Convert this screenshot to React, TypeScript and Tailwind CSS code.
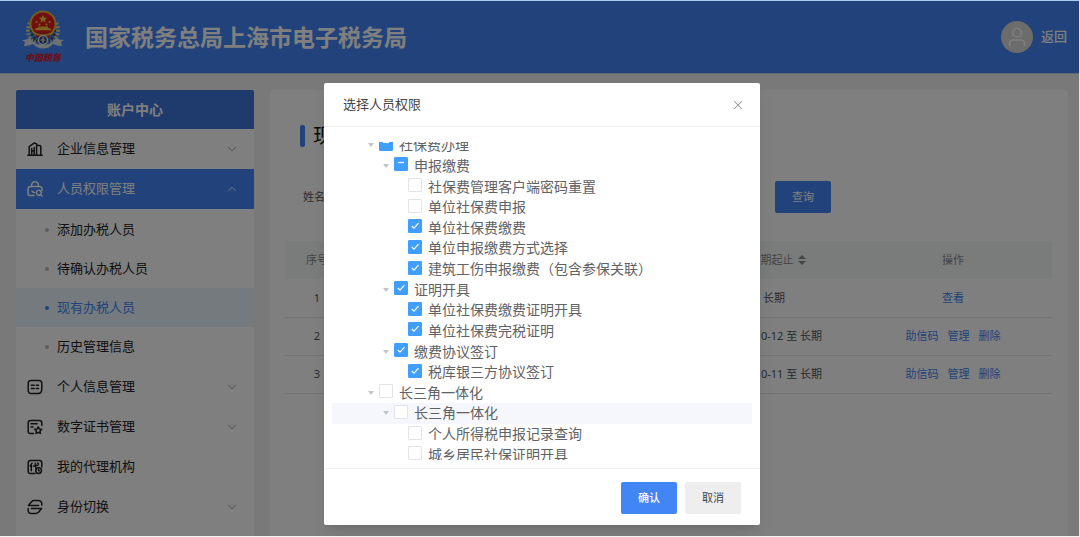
import { useState } from 'react';
import { ChevronDown, ChevronUp, X } from 'lucide-react';

type CheckState = 'on' | 'off' | 'mixed';

interface TreeNode {
  label: string;
  level: 0 | 1 | 2;
  state: CheckState;
  hover?: boolean;
}

const treeNodes: TreeNode[] = [
  { label: '社保费办理', level: 0, state: 'mixed' },
  { label: '申报缴费', level: 1, state: 'mixed' },
  { label: '社保费管理客户端密码重置', level: 2, state: 'off' },
  { label: '单位社保费申报', level: 2, state: 'off' },
  { label: '单位社保费缴费', level: 2, state: 'on' },
  { label: '单位申报缴费方式选择', level: 2, state: 'on' },
  { label: '建筑工伤申报缴费（包含参保关联）', level: 2, state: 'on' },
  { label: '证明开具', level: 1, state: 'on' },
  { label: '单位社保费缴费证明开具', level: 2, state: 'on' },
  { label: '单位社保费完税证明', level: 2, state: 'on' },
  { label: '缴费协议签订', level: 1, state: 'on' },
  { label: '税库银三方协议签订', level: 2, state: 'on' },
  { label: '长三角一体化', level: 0, state: 'off' },
  { label: '长三角一体化', level: 1, state: 'off', hover: true },
  { label: '个人所得税申报记录查询', level: 2, state: 'off' },
  { label: '城乡居民社保证明开具', level: 2, state: 'off' },
];

const indent = ['pl-[30px]', 'pl-[45px]', 'pl-[59px]'];

const subItems = ['添加办税人员', '待确认办税人员', '现有办税人员', '历史管理信息'];

const rows = [
  { no: 1, period: '长期', actions: ['查看'] },
  { no: 2, period: '2020-10-12 至 长期', actions: ['助信码', '管理', '删除'] },
  { no: 3, period: '2020-10-11 至 长期', actions: ['助信码', '管理', '删除'] },
];

const iconProps = {
  className: 'w-4 h-4 shrink-0',
  viewBox: '0 0 16 16',
  fill: 'none',
  stroke: 'currentColor',
  strokeWidth: 1.5,
  strokeLinecap: 'round' as const,
  strokeLinejoin: 'round' as const,
};

function BuildingIcon() {
  return (
    <svg {...iconProps}>
      <path d="M.8 14.2h14.4M2.2 14V5.6l5.200-3.800 2.200 1.100V14M9.600 4.600h3.200a1 1 0 0 1 1 1V14M4.700 14V7.600M7.200 14V6.500M4.700 10h2.500" />
    </svg>
  );
}

function LockIcon() {
  return (
    <svg {...iconProps}>
      <path d="M4.6 5.6V4.2a3.4 3.4 0 0 1 6.8 0v1.4M7 14.6H3.4A2.4 2.4 0 0 1 1 12.2V8a2.4 2.4 0 0 1 2.4-2.4h9.2A2.4 2.4 0 0 1 15 8v1.4M5 10c.4 1 1.200 1.500 2.400 1.500" />
      <path d="M9.400 11.300a2.500 2.500 0 0 1 4.900 0c.3 1.500-.9 2.400-2.400 3.300-1.500-.9-2.800-1.800-2.500-3.300zM13.800 14l1.200.900" />
    </svg>
  );
}

function CardIcon() {
  return (
    <svg {...iconProps}>
      <path d="M11 14.500H4A2.800 2.800 0 0 1 1.200 11.700V4.300A2.800 2.800 0 0 1 4 1.500h8a2.800 2.800 0 0 1 2.800 2.800v6M14.800 10.300c0 2.500-1.300 4.200-3.800 4.200M4.300 6.300h2.900M9.300 6.300h2.200M4.300 9.500h2.900M9.300 9.500h2.200" />
    </svg>
  );
}

function CertIcon() {
  return (
    <svg {...iconProps}>
      <path d="M6.500 14.500H3.500a2.300 2.300 0 0 1-2.300-2.300V3.800a2.300 2.300 0 0 1 2.300-2.300h9a2.300 2.300 0 0 1 2.300 2.300v2.700M4 4.800h6M4 8h2" />
      <path d="m11.200 7.800 1.100 2.100 2.400.4-1.700 1.700.4 2.400-2.200-1.100L9 14.400l.4-2.400-1.700-1.700 2.400-.4z" />
    </svg>
  );
}

function AgentIcon() {
  return (
    <svg {...iconProps}>
      <path d="M8 14.500H3.500a2.300 2.300 0 0 1-2.300-2.300V3.800a2.300 2.300 0 0 1 2.300-2.300h9a2.300 2.300 0 0 1 2.300 2.300V8M5 4.200 3.200 7.200M4.300 6v5.800M6.500 7l4.500-.8M8.300 4.200c.1 3 .3 4.800 1.200 6M10.700 4l.8.900" />
      <circle cx="11.600" cy="11.600" r="2.900" />
      <path d="M11.600 10.600v1.200h.9" />
    </svg>
  );
}

function SwitchIcon() {
  return (
    <svg {...iconProps}>
      <path d="M14.800 6V4.800a3.300 3.300 0 0 0-3.300-3.300H7.200c-1.200 0-1.900.4-2.700 1.200L1.400 6.500h10.200" />
      <path d="M1.200 9.500v1.700a3.300 3.300 0 0 0 3.300 3.300h4.300c1.200 0 1.900-.4 2.700-1.200l3.100-3.800H4.400" />
    </svg>
  );
}

function Emblem() {
  return (
    <svg className="w-[42px] h-[41px]" viewBox="0 0 42 41">
      <path d="M8 13C4 20 6 29 14 33M34 13c4 7 2 16-6 20" fill="none" stroke="#d9cfae" strokeWidth="4" strokeDasharray="2 1.500" />
      <path d="M11 16c-3 5-1 11 4 15M31 16c3 5 1 11-4 15" fill="none" stroke="#3b4a3a" strokeWidth="3" strokeDasharray="2 2" />
      <circle cx="21" cy="14" r="13.500" fill="#e9b93c" />
      <circle cx="21" cy="14" r="11.500" fill="#e01f17" />
      <path d="m21 5 1.200 2.500 2.800.3-2 1.900.5 2.700-2.500-1.300-2.500 1.300.5-2.700-2-1.900 2.800-.3z" fill="#f3c843" />
      <g fill="#f3c843">
        <circle cx="14.500" cy="12" r="1.100" />
        <circle cx="27.500" cy="12" r="1.100" />
        <circle cx="17.500" cy="14.500" r="1" />
        <circle cx="24.500" cy="14.500" r="1" />
        <path d="M14 18h14l1.500 2.200h-17zM16 16.500h10V18H16z" />
      </g>
      <path d="M13 22h16l-2 6H15z" fill="#c52318" />
      <path d="M12 23c5 3 13 3 18 0" fill="none" stroke="#e9b93c" strokeWidth="1.600" />
      <path d="M0 30c4 0 6-1 8-2 3 5 8 7 13 7s10-2 13-7c2 1 4 2 8 2l-3 2 1 4c-4 0-6-1-9-2-3 3-6 4.500-10 4.500S14 37 11 34c-3 1-5 2-9 2l1-4z" fill="#dfe4ea" />
      <circle cx="21" cy="30" r="4.500" fill="#2f4a7a" stroke="#e6e6e6" strokeWidth="1.400" />
      <path d="M21 27v6M18.500 30h5" stroke="#e6e6e6" strokeWidth="1.200" />
    </svg>
  );
}

function Header() {
  return (
    <header className="flex h-[73px] shrink-0 items-center border-b border-[#b9cfee] bg-[#4285f4] pr-3 pl-[22px] text-white">
      <div className="flex w-[42px] flex-col items-center">
        <Emblem />
        <span className="font-['Liberation_Serif','Noto_Sans_CJK_SC',serif] text-[9px] leading-[14px] font-black whitespace-nowrap text-[#d3202b] italic">
          中国税务
        </span>
      </div>
      <h1 className="ml-[21px] text-[23px] leading-8 font-bold">国家税务总局上海市电子税务局</h1>
      <a href="#back" className="ml-auto flex items-center gap-2 text-[13px] font-medium">
        <span className="flex h-8 w-8 items-center justify-center rounded-full bg-[#d9d9d9] text-white">
          <svg className="h-5 w-5" viewBox="0 0 20 20" fill="none" stroke="currentColor" strokeWidth="1.600">
            <circle cx="10" cy="5.500" r="4.200" />
            <path d="M2.500 19v-2.500a3.500 3.500 0 0 1 3.500-3.500h8a3.500 3.500 0 0 1 3.500 3.500V19" />
          </svg>
        </span>
        返回
      </a>
    </header>
  );
}

interface MenuItemProps {
  icon: React.ReactNode;
  label: string;
  active?: boolean;
  arrow?: boolean;
}

function MenuItem({ icon, label, active = false, arrow = true }: MenuItemProps) {
  const Chevron = active ? ChevronUp : ChevronDown;
  return (
    <button
      type="button"
      className={`flex h-10 w-full items-center pr-[15px] pl-[11px] text-left ${active ? 'bg-[#4285f4] text-white' : 'text-[#222]'}`}
    >
      {icon}
      <span className="ml-[14px] flex-1">{label}</span>
      {arrow && <Chevron className={`h-3.5 w-3.5 ${active ? 'text-white' : 'text-[#888]'}`} strokeWidth={1.5} />}
    </button>
  );
}

function Sidebar() {
  return (
    <nav className="w-[238px] shrink-0 self-stretch bg-white text-[13px]">
      <h2 className="flex h-[39px] items-center justify-center rounded-t-xs bg-[#3e74d8] text-sm font-bold text-white">
        账户中心
      </h2>
      <MenuItem icon={<BuildingIcon />} label="企业信息管理" />
      <MenuItem icon={<LockIcon />} label="人员权限管理" active />
      <ul className="py-px">
        {subItems.map((item) => {
          const current = item === '现有办税人员';
          return (
            <li key={item}>
              <a
                href="#staff"
                className={`flex h-[39px] items-center gap-2 pl-[29px] ${current ? 'bg-[#e8f4fc] text-[#4285f4]' : 'text-[#222]'}`}
              >
                <span className={`h-1 w-1 rounded-full ${current ? 'bg-[#4285f4]' : 'bg-[#bbb]'}`} />
                {item}
              </a>
            </li>
          );
        })}
      </ul>
      <MenuItem icon={<CardIcon />} label="个人信息管理" />
      <MenuItem icon={<CertIcon />} label="数字证书管理" />
      <MenuItem icon={<AgentIcon />} label="我的代理机构" arrow={false} />
      <MenuItem icon={<SwitchIcon />} label="身份切换" />
    </nav>
  );
}

function StaffPanel() {
  return (
    <main className="min-w-0 flex-1 self-stretch rounded-t-sm bg-white pr-4 pl-[15px] text-[11px] text-[#555]">
      <div className="flex h-[91px] items-center pl-[15px]">
        <span className="h-[22px] w-[5px] rounded-xs bg-[#4285f4]" />
        <h2 className="ml-2 text-xl text-[#111]">现有办税人员</h2>
      </div>
      <form className="flex h-8 items-center pl-[18px]">
        <label htmlFor="staff-name">姓名</label>
        <input id="staff-name" className="ml-4 h-8 w-48 rounded-xs border border-[#ddd] px-2" />
        <button type="button" className="ml-[242px] h-8 w-14 rounded-xs bg-[#4285f4] text-white">
          查询
        </button>
      </form>
      <table className="mt-7 w-full table-fixed border-collapse text-center">
        <colgroup>
          <col className="w-[64px]" />
          <col />
          <col className="w-[160px]" />
          <col className="w-[198px]" />
        </colgroup>
        <thead>
          <tr className="h-[38px] bg-[#f5f9f9] text-[#888]">
            <th className="font-normal">序号</th>
            <th />
            <th className="pr-1 font-normal">
              <span className="inline-flex items-center gap-1 whitespace-nowrap">
                有效期起止
                <svg className="h-2.5 w-2" viewBox="0 0 8 10" fill="currentColor">
                  <path d="M0 4 4 0l4 4zM0 6h8l-4 4z" />
                </svg>
              </span>
            </th>
            <th className="font-normal">操作</th>
          </tr>
        </thead>
        <tbody>
          {rows.map((row) => (
            <tr key={row.no} className="h-[38px] border-b border-[#e9e9ef]">
              <td>{row.no}</td>
              <td />
              <td className="whitespace-nowrap">{row.period}</td>
              <td>
                <div className="flex justify-center gap-[9px] text-[#4285f4]">
                  {row.actions.map((action) => (
                    <a key={action} href="#action">
                      {action}
                    </a>
                  ))}
                </div>
              </td>
            </tr>
          ))}
        </tbody>
      </table>
    </main>
  );
}

function TreeRow({ node, state, onToggle }: { node: TreeNode; state: CheckState; onToggle: () => void }) {
  return (
    <li className={`flex items-center ${indent[node.level]} ${node.hover ? 'bg-[#f5f7fc]' : ''}`}>
      <span className="flex w-[17px] justify-center">
        {node.level < 2 && (
          <svg className="h-1 w-1.5" viewBox="0 0 6 4">
            <path d="M0 0h6L3 4z" fill="#c0c4cc" />
          </svg>
        )}
      </span>
      <label className="flex items-center gap-1.5">
        <span className="mb-[3px] grid h-3.5 w-3.5">
          <input
            type="checkbox"
            checked={state === 'on'}
            onChange={onToggle}
            className={`col-start-1 row-start-1 h-3.5 w-3.5 appearance-none rounded-[1px] border ${
              state === 'off' ? 'border-[#e2e4ea] bg-white' : 'border-[#409eff] bg-[#409eff]'
            }`}
          />
          <svg
            className="pointer-events-none col-start-1 row-start-1 h-3.5 w-3.5"
            viewBox="0 0 14 14"
            fill="none"
            stroke="#fff"
            strokeWidth="1.200"
          >
            {state === 'on' && <path d="m3.800 7 2.200 2.200 4.500-5" />}
            {state === 'mixed' && <path d="M4 5.500h6" />}
          </svg>
        </span>
        {node.label}
      </label>
    </li>
  );
}

function PermissionDialog() {
  const [states, setStates] = useState(treeNodes.map((node) => node.state));

  const toggle = (index: number) =>
    setStates((prev) => prev.map((s, i) => (i === index ? (s === 'on' ? 'off' : 'on') : s)));

  return (
    <div
      role="dialog"
      aria-labelledby="dialog-title"
      className="w-[436px] rounded-xs bg-white text-[#606266] shadow-lg"
    >
      <div className="flex h-11 items-center justify-between border-b border-[#eee] pr-[15px] pl-[19px]">
        <h2 id="dialog-title" className="text-[13px] text-[#444]">
          选择人员权限
        </h2>
        <button type="button" aria-label="关闭" className="text-[#909399]">
          <X className="h-3.5 w-3.5" strokeWidth={1.75} />
        </button>
      </div>
      {/* Scrolled tree, first and last rows are partly cut off */}
      <div className="px-2 pt-[15px] pb-2">
        <div className="flex h-[318px] items-end overflow-hidden">
          <ul className="-mb-[5px] grid h-[330px] w-full shrink-0 auto-rows-fr text-sm leading-5">
            {treeNodes.map((node, index) => (
              <TreeRow key={index} node={node} state={states[index]} onToggle={() => toggle(index)} />
            ))}
          </ul>
        </div>
      </div>
      <div className="flex justify-end gap-2 border-t border-[#eee] pt-[13px] pr-[19px] pb-[11px] text-[11px]">
        <button type="button" className="h-8 w-14 rounded-xs bg-[#4285f4] font-medium text-white">
          确认
        </button>
        <button type="button" className="h-8 w-14 rounded-xs bg-[#eee] text-[#444]">
          取消
        </button>
      </div>
    </div>
  );
}

export default function App() {
  return (
    <div className="relative flex h-screen flex-col overflow-hidden border-t border-r border-b border-t-[#a9cbf3] border-r-[#dfe6ee] border-b-[#f4f4f4] font-['Noto_Sans','Noto_Sans_CJK_SC',sans-serif]">
      <Header />
      <div className="flex flex-1 gap-4 bg-[#f3f3f3] pt-4 pr-[11px] pl-4">
        <Sidebar />
        <StaffPanel />
      </div>
      <div className="absolute inset-0 flex items-start justify-center bg-black/50 pt-[82px] pl-[5px]">
        <PermissionDialog />
      </div>
    </div>
  );
}
